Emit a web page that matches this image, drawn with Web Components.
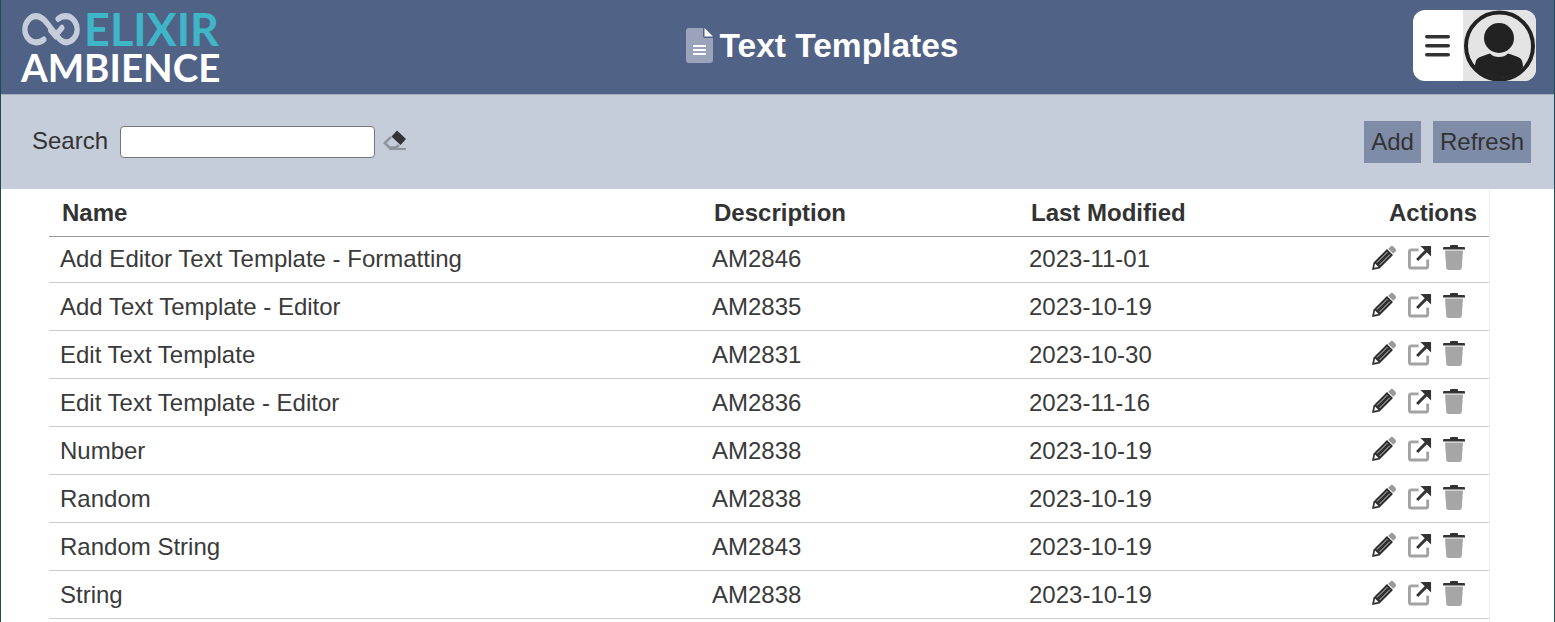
<!DOCTYPE html>
<html>
<head>
<meta charset="utf-8">
<title>Text Templates</title>
<style>
html, body { margin: 0; padding: 0; height: 100%; overflow: hidden; background: #fff; }
body { font-family: "Liberation Sans", Arial, sans-serif; }
</style>
</head>
<body>
<app-shell>
    <app-header title-text="Text Templates"></app-header>
    <search-bar></search-bar>
    <template-table>
        <template-row name="Add Editor Text Template - Formatting" desc="AM2846" date="2023-11-01"></template-row>
        <template-row name="Add Text Template - Editor" desc="AM2835" date="2023-10-19"></template-row>
        <template-row name="Edit Text Template" desc="AM2831" date="2023-10-30"></template-row>
        <template-row name="Edit Text Template - Editor" desc="AM2836" date="2023-11-16"></template-row>
        <template-row name="Number" desc="AM2838" date="2023-10-19"></template-row>
        <template-row name="Random" desc="AM2838" date="2023-10-19"></template-row>
        <template-row name="Random String" desc="AM2843" date="2023-10-19"></template-row>
        <template-row name="String" desc="AM2838" date="2023-10-19"></template-row>
    </template-table>
</app-shell>

<script>
class AppShell extends HTMLElement {
    constructor() {
        super();
        this.attachShadow({mode: "open"});
        this.shadowRoot.innerHTML = `
        <style>
        :host {
            display: block;
            height: 622px;
            box-sizing: border-box;
            border-left: 1px solid #1d4a55;
            border-right: 1px solid #1d4a55;
            overflow: hidden;
            color: #333;
        }
        </style>
        <slot></slot>`;
    }
}

class AppHeader extends HTMLElement {
    constructor() {
        super();
        this.attachShadow({mode: "open"});
        this.shadowRoot.innerHTML = `
        <style>
        :host {
            display: grid;
            grid-template-columns: 1fr auto 1fr;
            align-items: center;
            height: 95px;
            box-sizing: border-box;
            background: #506285;
            border-bottom: 1px solid #a9afb8;
        }
        .logo { padding: 11px 0 0 21px; display: flex; flex-direction: column; align-self: start; }
        .top { display: flex; align-items: center; height: 36px; }
        .top svg { display: block; flex: none; margin-top: 1px; }
        .elixir { display: block; height: 36px; font: 700 45px/36px Lato, sans-serif; color: #3fb6c8; margin-left: 4px; }
        .ambience { display: block; height: 32px; font: 700 38.500px/32px Lato, sans-serif; color: #fff; margin: 4px 0 0 -1px; }
        .title { display: flex; align-items: center; gap: 7px; color: #fff; font: 700 33.500px/38px "Liberation Sans", sans-serif; margin-left: 89px; margin-top: -3px; }
        .user { justify-self: end; margin: -3px 18px 0 0; width: 123px; height: 71px; border-radius: 12px; background: #fff; overflow: hidden; display: flex; }
        .burger { width: 50px; display: flex; align-items: center; justify-content: center; }
        .avatar { width: 73px; height: 71px; background: #e4e4e4; }
        </style>
        <div class="logo">
            <div class="top">
                <svg width="58" height="33" viewBox="1 3.700 61 29.600" preserveAspectRatio="none" fill="none" stroke="#c5ccda" stroke-width="5.500" stroke-linecap="round">
                    <path d="M24 27.500c-2 1.500-5 2.500-8 2.500-7 0-12-5.500-12-11.500s5-12 12-12c5 0 8 2.500 12 7l9 10c3 3.500 6 6.500 10 6.500 7 0 12-5.500 12-11.500s-5-12-12-12c-3 0-6 1-8 2.500"/>
                    <path d="M31 19l5 5 7-7"/>
                </svg>
                <span class="elixir">ELIXIR</span>
            </div>
            <div class="ambience">AMBIENCE</div>
        </div>
        <div class="title">
            <svg width="27" height="35" viewBox="0 0 27 35">
                <path fill="#9aa3b9" d="M3 0h14v8a2 2 0 0 0 2 2h8v22a3 3 0 0 1-3 3H3a3 3 0 0 1-3-3V3a3 3 0 0 1 3-3z"/>
                <path fill="#fff" d="M18.500 0l8.500 8.500h-8.500z"/>
                <path fill="#fff" d="M7 17h13v2H7zM7 21h13v2H7zM7 25h13v2H7z"/>
            </svg>
            <span>${this.getAttribute("title-text")}</span>
        </div>
        <div class="user">
            <div class="burger">
                <svg width="26" height="22" viewBox="0 0 26 22" fill="#333">
                    <rect x="0" y="0" width="25" height="3.400" rx="1.700"/>
                    <rect x="0" y="9" width="25" height="3.400" rx="1.700"/>
                    <rect x="0" y="18" width="25" height="3.400" rx="1.700"/>
                </svg>
            </div>
            <div class="avatar">
                <svg width="73" height="71" viewBox="0 0 73 71">
                    <circle cx="36.500" cy="36" r="33.500" fill="#e4e4e4" stroke="#222" stroke-width="4"/>
                    <circle cx="36" cy="28" r="15" fill="#222"/>
                    <path fill="#222" d="M12 57c0-4 1-8 4-9.500 4-2 8-3 11-4 2 2.500 5.500 3.500 9 3.500s7-1 9-3.500c3 1 7 2 11 4 3 1.500 4 5.500 4 9.500-5 7-14 11-24 11s-19-4-24-11z"/>
                </svg>
            </div>
        </div>`;
    }
}

class SearchBar extends HTMLElement {
    constructor() {
        super();
        this.attachShadow({mode: "open"});
        this.shadowRoot.innerHTML = `
        <style>
        :host {
            display: flex;
            align-items: center;
            justify-content: space-between;
            height: 94px;
            box-sizing: border-box;
            background: #c5ccda;
            padding: 0 23px 0 31px;
            font: 24px "Liberation Sans", sans-serif;
            color: #333;
        }
        .left { display: flex; align-items: center; margin-top: -1px; }
        label { margin: -2px 12px 0 0; }
        input {
            width: 255px; height: 32px; box-sizing: border-box;
            border: 1px solid #767676; border-radius: 4px; background: #fff;
            padding: 0; margin: 0 8px 0 0; outline: none;
        }
        svg { display: block; margin-top: -3px; }
        .right { display: flex; gap: 12px; margin-top: -1px; }
        button {
            height: 42px; border: none; padding: 0 7px; margin: 0;
            background: #7f8ca8; color: #333; font: 24px "Liberation Sans", sans-serif;
        }
        </style>
        <div class="left">
            <label>Search</label>
            <input type="text">
            <svg width="24" height="22" viewBox="0 0 24 22">
                <path fill="none" stroke="#8f949c" stroke-width="2.500" d="M8 8L1.800 14l4.500 4.500h7L16 16"/>
                <path fill="none" stroke="#8f949c" stroke-width="2" d="M6 20h17"/>
                <path fill="#333" d="M14 1.500l9 8.500-5.500 6L8.500 7.500z"/>
            </svg>
        </div>
        <div class="right">
            <button>Add</button>
            <button>Refresh</button>
        </div>`;
    }
}

class TemplateTable extends HTMLElement {
    constructor() {
        super();
        this.attachShadow({mode: "open"});
        this.shadowRoot.innerHTML = `
        <style>
        :host {
            display: block;
            width: 1489px;
            box-sizing: border-box;
            padding-left: 48px;
            border-right: 1px solid #eee;
            height: 433px;
            font: 24px "Liberation Sans", sans-serif;
            color: #333;
        }
        .head {
            display: grid;
            grid-template-columns: 652px 317px 1fr 120px;
            height: 48px;
            box-sizing: border-box;
            align-items: center;
            border-bottom: 1px solid #999;
            font-weight: 700;
            padding: 0 12px 0 13px;
        }
        .head span:last-child { text-align: right; }
        </style>
        <div class="head">
            <span>Name</span>
            <span>Description</span>
            <span>Last Modified</span>
            <span>Actions</span>
        </div>
        <slot></slot>`;
    }
}

const rowTemplate = document.createElement("template");
rowTemplate.innerHTML = `
    <style>
    :host {
        display: grid;
        grid-template-columns: 652px 317px 1fr 120px;
        align-items: center;
        height: 48px;
        box-sizing: border-box;
        border-bottom: 1px solid #ccc;
        padding: 0 12px 0 11px;
        color: #3a3a3a;
    }
    :host(:first-child) { height: 46px; }
    :host(:first-child) span { margin-top: -1px; }
    :host(:first-child) .icons { margin-top: -4px; }
    .icons { display: flex; justify-content: flex-end; align-items: center; margin: -3px 12px 0 0; }
    svg { display: block; flex: none; }
    .pencil { margin-right: 11px; }
    .open { margin-right: 11px; }
    </style>
    <span class="name"></span>
    <span class="desc"></span>
    <span class="date"></span>
    <div class="icons">
        <svg class="pencil" width="26" height="26" viewBox="0 0 26 26">
            <path fill="#999" d="M19.500 1.500a2 2 0 0 1 2.800 0l2.200 2.200a2 2 0 0 1 0 2.800l-2.300 2.300-5-5z"/>
            <path fill="#2e2e2e" d="M16 4l6 6L8.500 23.500 1 25l1.500-7.500zM4 18.500l-.8 4.300 4.300-.8z"/>
            <path stroke="#c8c8c8" stroke-width="1" d="M16.500 7L6 17.500M19 9.500L8.500 20"/>
        </svg>
        <svg class="open" width="24" height="25" viewBox="0 0 25 26">
            <path fill="none" stroke="#a3a3a3" stroke-width="3" d="M11 5H3.500a2 2 0 0 0-2 2v15a2 2 0 0 0 2 2h15a2 2 0 0 0 2-2v-7"/>
            <path fill="none" stroke="#333" stroke-width="3" d="M9.500 15.500L21 4"/>
            <path fill="#333" d="M13 1h11v11z"/>
        </svg>
        <svg width="22" height="25" viewBox="0 0 22 25">
            <path fill="#333" d="M8 0h6a1 1 0 0 1 1 1v1h6a1 1 0 0 1 1 1v1.500H0V3a1 1 0 0 1 1-1h6V1a1 1 0 0 1 1-1z"/>
            <path fill="#a6a6a6" d="M2 5.500h18l-1.300 17.500a2 2 0 0 1-2 2H5.300a2 2 0 0 1-2-2z"/>
        </svg>
    </div>`;

class TemplateRow extends HTMLElement {
    constructor() {
        super();
        this.attachShadow({mode: "open"});
        this.shadowRoot.appendChild(rowTemplate.content.cloneNode(true));
        this.shadowRoot.querySelector(".name").innerText = this.getAttribute("name");
        this.shadowRoot.querySelector(".desc").innerText = this.getAttribute("desc");
        this.shadowRoot.querySelector(".date").innerText = this.getAttribute("date");
    }
}

window.customElements.define("app-shell", AppShell);
window.customElements.define("app-header", AppHeader);
window.customElements.define("search-bar", SearchBar);
window.customElements.define("template-table", TemplateTable);
window.customElements.define("template-row", TemplateRow);
</script>
</body>
</html>
